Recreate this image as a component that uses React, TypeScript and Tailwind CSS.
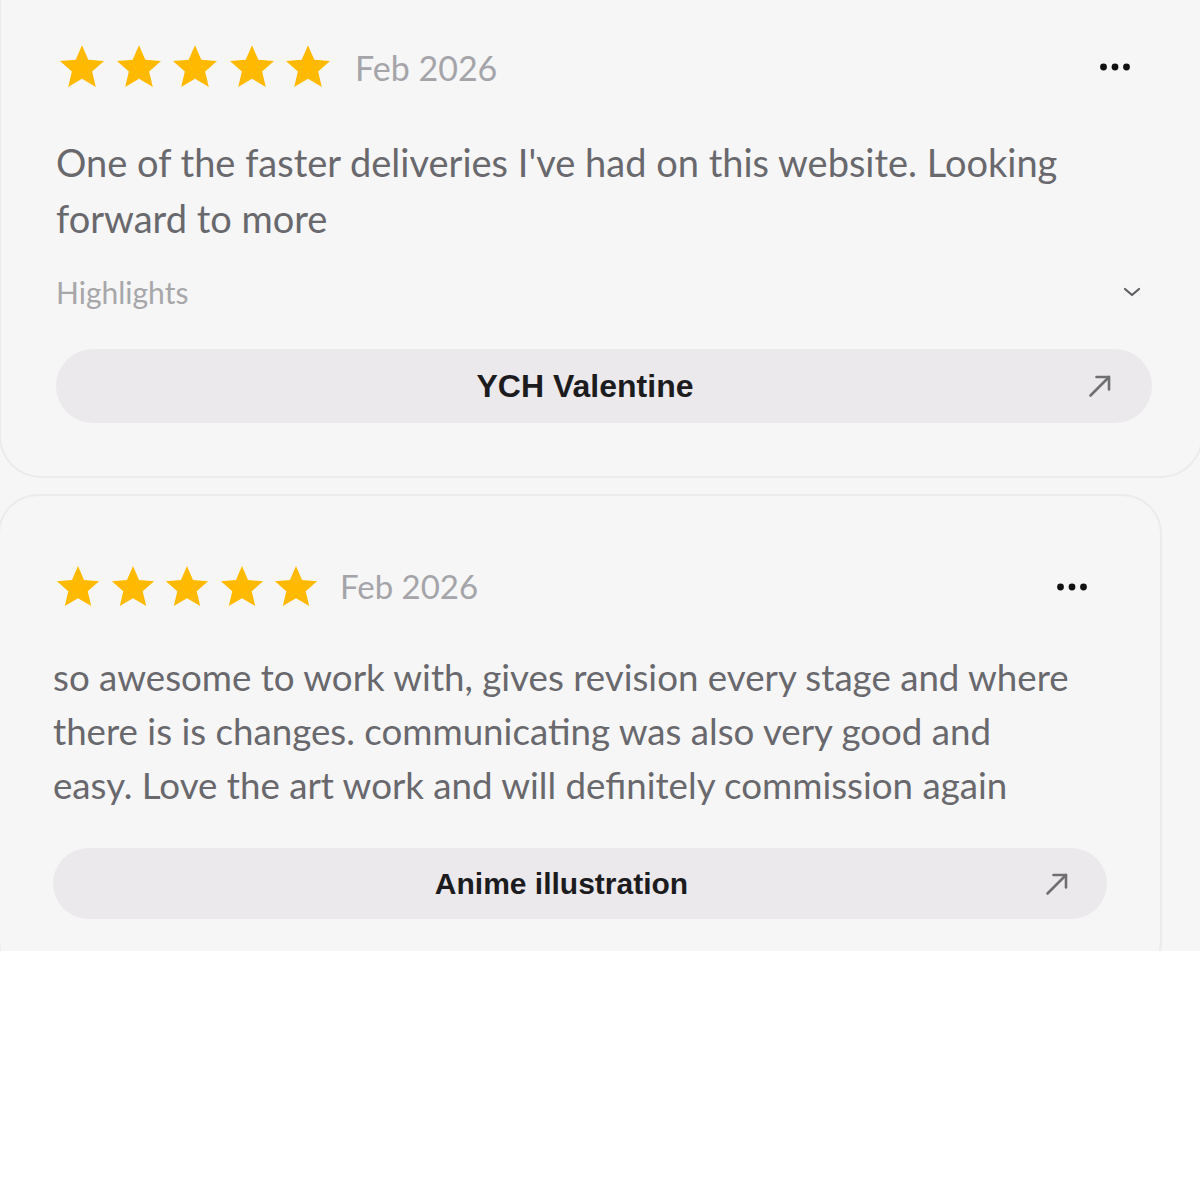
import React from 'react'

const body = { fontFamily: 'Lato, "Noto Sans", sans-serif' }
const label = { fontFamily: '"Liberation Sans", Arial, sans-serif' }

function Star({ size }: { size: number }) {
  return (
    <svg width={size} height={size} viewBox="0 0 24 24" className="shrink-0">
      <path
        d="M12 0.6l3.3 7.6 8.2.7-6.2 5.4 1.9 8.1L12 18.1l-7.2 4.3 1.9-8.1L0.5 8.9l8.2-.7z"
        fill="#FFBA00"
      />
    </svg>
  )
}

function Dots() {
  return (
    <svg width="30" height="8" viewBox="0 0 30 8">
      <circle cx="3.5" cy="4" r="3.4" fill="#111" />
      <circle cx="15" cy="4" r="3.4" fill="#111" />
      <circle cx="26.5" cy="4" r="3.4" fill="#111" />
    </svg>
  )
}

function Arrow() {
  return (
    <svg width="24" height="24" viewBox="0 0 24 24" fill="none" stroke="#6f6f72" strokeWidth="2.6" strokeLinecap="round" strokeLinejoin="round" className="shrink-0">
      <path d="M2.5 21.5 21 3" />
      <path d="M8.5 3H21v12.5" />
    </svg>
  )
}

function Chevron() {
  return (
    <svg width="18" height="10" viewBox="0 0 18 10" fill="none" stroke="#5f5f63" strokeWidth="2.2" strokeLinecap="round" strokeLinejoin="round">
      <path d="M2 2l7 6 7-6" />
    </svg>
  )
}

export default function App() {
  return (
    <div className="w-[1200px] h-[1200px] bg-white">
      <div className="h-[951px] bg-[#f6f6f6] overflow-hidden">
        {/* first review, top cut off */}
        <div className="ml-[-1px] w-[1204px] border-2 border-t-0 border-[#ebebeb] rounded-b-[42px] pl-[55px] pt-[44px] pb-[53px]">
          <div className="w-[1096px]">
            <div className="flex items-center h-[46px]">
              <div className="ml-[3px] flex items-center gap-[10.5px]">
                {[0, 1, 2, 3, 4].map((i) => (
                  <Star key={i} size={46} />
                ))}
              </div>
              <span className="ml-[24px] text-[34px] text-[#a4a4a9]" style={body}>Feb 2026</span>
              <div className="ml-auto mr-[22px]"><Dots /></div>
            </div>
            <p className="mt-[44px] text-[38px] leading-[56px] text-[#68686d]" style={body}>
              One of the faster deliveries I've had on this website. Looking forward to more
            </p>
            <div className="mt-[30px] flex items-center h-[32px]">
              <span className="text-[30px] text-[#a7a7aa]" style={body}>Highlights</span>
              <div className="ml-auto mr-[11px]"><Chevron /></div>
            </div>
            <div className="mt-[41px] h-[74px] rounded-full bg-[#ebe9ec] flex items-center pl-[40px] pr-[40px] gap-[14px]">
              <span className="flex-1 text-center text-[32px] font-bold text-[#1c1c1e]" style={label}>YCH Valentine</span>
              <Arrow />
            </div>
          </div>
        </div>

        {/* second review, bottom cut off */}
        <div className="mt-[16px] ml-[-2px] w-[1164px] border-2 border-[#ebebeb] rounded-[40px] pl-[53px] pt-[69px] pb-[60px]">
          <div className="w-[1054px]">
            <div className="flex items-center h-[43px]">
              <div className="ml-[3px] flex items-center gap-[10.5px]">
                {[0, 1, 2, 3, 4].map((i) => (
                  <Star key={i} size={44} />
                ))}
              </div>
              <span className="ml-[22px] text-[33px] text-[#a4a4a9]" style={body}>Feb 2026</span>
              <div className="ml-auto mr-[20px]"><Dots /></div>
            </div>
            <p className="mt-[42px] w-[1020px] text-[36.7px] leading-[54px] text-[#68686d]" style={body}>
              so awesome to work with, gives revision every stage and where there is is changes. communicating was also very good and easy. Love the art work and will definitely commission again
            </p>
            <div className="mt-[36px] h-[71px] rounded-full bg-[#ebe9ec] flex items-center pl-[38px] pr-[38px] gap-[13px]">
              <span className="flex-1 text-center text-[30px] font-bold text-[#1c1c1e]" style={label}>Anime illustration</span>
              <Arrow />
            </div>
          </div>
        </div>
      </div>
    </div>
  )
}
